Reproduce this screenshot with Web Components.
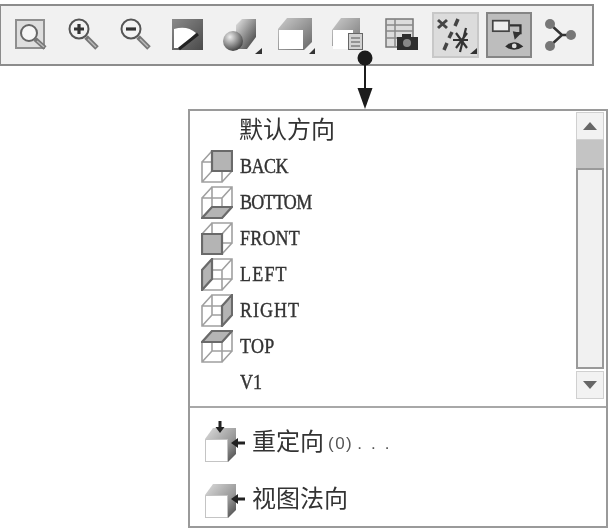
<!DOCTYPE html>
<html lang="zh">
<head>
<meta charset="utf-8">
<title>saved views</title>
<style>
  html, body { margin: 0; background: #fff; overflow: hidden; }
  body { position: relative; width: 609px; height: 528px; font-family: "Noto Sans CJK SC", "Liberation Sans", sans-serif; color: #333; }
  small i { font-style: normal; letter-spacing: 9px; margin-left: 4px; }
</style>
</head>
<body>
<tool-bar>
  <tool-btn w="32" ml="8"><svg viewBox="15 12 32 46"><rect x="16" y="20" width="28" height="28" fill="#dedede" stroke="#8f8f8f" stroke-width="2"/><circle cx="29" cy="33" r="8" fill="#f6f6f6" stroke="#666" stroke-width="2"/><path d="M35 39l10 9" stroke="#777" stroke-width="4.500"/><path d="M37 41l7 6" stroke="#bbb" stroke-width="1.500"/></svg></tool-btn>
  <tool-btn w="34" ml="20"><svg viewBox="67 12 34 46"><circle cx="79" cy="29" r="9.500" fill="#f2f2f2" stroke="#555" stroke-width="2"/><path d="M74 29h10M79 24v10" stroke="#333" stroke-width="3.200"/><path d="M86 37l11 11" stroke="#777" stroke-width="5"/><path d="M88 39l8 8" stroke="#bbb" stroke-width="1.500"/></svg></tool-btn>
  <tool-btn w="34" ml="18"><svg viewBox="119 12 34 46"><circle cx="131" cy="29" r="9.500" fill="#f2f2f2" stroke="#555" stroke-width="2"/><path d="M126 29h10" stroke="#333" stroke-width="3.200"/><path d="M138 37l11 11" stroke="#777" stroke-width="5"/><path d="M140 39l8 8" stroke="#bbb" stroke-width="1.500"/></svg></tool-btn>
  <tool-btn w="33" ml="18"><svg viewBox="171 12 33 46"><defs><linearGradient id="a" x1="0" y1="0" x2="1" y2="1"><stop offset="0" stop-color="#8a8a8a"/><stop offset="1" stop-color="#4a4a4a"/></linearGradient></defs><rect x="172" y="19" width="31" height="31" fill="url(#a)"/><path d="M174 29q13-4 22 4l-15 15h-7z" fill="#fff"/><path d="M179 49l19-15" stroke="#222" stroke-width="3"/></svg></tool-btn>
  <tool-btn w="41" ml="19"><svg viewBox="223 12 41 46"><defs><linearGradient id="b" x1="0" y1="0" x2="1" y2="1"><stop offset="0" stop-color="#e8e8e8"/><stop offset="1" stop-color="#333"/></linearGradient><radialGradient id="c" cx=".35" cy=".3" r=".8"><stop offset="0" stop-color="#eee"/><stop offset="1" stop-color="#333"/></radialGradient></defs><path d="M236 25l6-6h14v18l-9 12h-11z" fill="url(#b)"/><circle cx="233" cy="41" r="10" fill="url(#c)"/><path d="M255 54h7v-6z" fill="#333"/></svg></tool-btn>
  <tool-btn w="38" ml="13"><svg viewBox="277 12 38 46"><defs><linearGradient id="e" x1="0" y1="0" x2="1" y2="1"><stop offset="0" stop-color="#ccc"/><stop offset="1" stop-color="#666"/></linearGradient></defs><path d="M278 29l9-11h25v24l-8 8h-26z" fill="url(#e)"/><path d="M279 30h24v19h-24z" fill="#fff"/><path d="M309 54h6v-6z" fill="#333"/></svg></tool-btn>
  <tool-btn w="33" ml="16"><svg viewBox="331 12 33 46"><defs><linearGradient id="d" x1="0" y1="0" x2="1" y2="1"><stop offset="0" stop-color="#ccc"/><stop offset="1" stop-color="#777"/></linearGradient></defs><path d="M332 30l9-12h19v28h-28z" fill="url(#d)"/><path d="M333 30h20v19h-20z" fill="#fff"/><rect x="348.500" y="33.500" width="14" height="16" fill="#d2d2d2" stroke="#666"/><path d="M351 38h9M351 42h9M351 46h9" stroke="#555"/></svg></tool-btn>
  <tool-btn w="35" ml="20"><svg viewBox="384 12 35 46"><rect x="386" y="19" width="27" height="28" fill="#dcdcdc" stroke="#777" stroke-width="1.500"/><path d="M386 25h27M386 31h27M386 38h14M395 19v28" stroke="#888" stroke-width="1.500"/><rect x="397" y="37" width="21" height="13" fill="#2e2e2e"/><rect x="402" y="34" width="9" height="4" fill="#2e2e2e"/><circle cx="407" cy="43" r="4" fill="#888"/></svg></tool-btn>
  <tool-btn w="47" ml="13" state="soft"><svg viewBox="434 14 43 42"><path d="M438 20l9 8M447 20l-9 8" stroke="#444" stroke-width="3"/><path d="M458 19l-3 7M452 32l-3 6M447 43l-3 7" stroke="#444" stroke-width="3.500"/><path d="M466 28l-6 24M453 40h15M456 33l11 15M467 33l-11 15" stroke="#333" stroke-width="2.200"/><path d="M470 54h7v-6z" fill="#333"/></svg></tool-btn>
  <tool-btn w="46" ml="7" state="on"><svg viewBox="487 14 44 42"><rect x="492" y="20" width="17" height="11" fill="#eee" stroke="#444" stroke-width="1.800"/><path d="M510 25h11v8h-5" fill="none" stroke="#333" stroke-width="2.400"/><path d="M513 31l9 2-7 7z" fill="#333"/><path d="M505 47q9-9 19 0q-10 7-19 0z" fill="#2e2e2e"/><circle cx="514.500" cy="46.500" r="2.500" fill="#ddd"/></svg></tool-btn>
  <tool-btn w="32" ml="13"><svg viewBox="545 12 32 46"><path d="M551 25l11 10-11 10M562 35h8" fill="none" stroke="#333" stroke-width="2.500"/><circle cx="550" cy="24" r="5" fill="#777"/><circle cx="571" cy="35" r="5" fill="#777"/><circle cx="550" cy="46" r="5" fill="#777"/></svg></tool-btn>
</tool-bar>

<call-out></call-out>

<view-panel>
  <view-row>默认方向</view-row>
  <view-row face="back" mono style="letter-spacing:-.5px">BACK</view-row>
  <view-row face="bottom" mono style="letter-spacing:-.7px">BOTTOM</view-row>
  <view-row face="front" mono style="letter-spacing:.2px">FRONT</view-row>
  <view-row face="left" mono style="letter-spacing:1.2px">LEFT</view-row>
  <view-row face="right" mono style="letter-spacing:1px">RIGHT</view-row>
  <view-row face="top" mono style="letter-spacing:.3px">TOP</view-row>
  <view-row mono>V1</view-row>

  <action-row slot="actions" kind="reorient">重定向<small>(0)<i>...</i></small></action-row>
  <action-row slot="actions" kind="normal">视图法向</action-row>
</view-panel>

<script>
class ToolBar extends HTMLElement {
  constructor() {
    super();
    this.attachShadow({ mode: "open" }).innerHTML = `
      <style>
        :host { display: flex; box-sizing: border-box; width: 594px; height: 62px; margin-top: 4px;
                align-items: center; background: #f1f1f1; border: 2px solid #8c8c8c; border-left-width: 1px; padding-left: 6px; }
      </style>
      <slot></slot>`;
  }
}
customElements.define("tool-bar", ToolBar);

class ToolBtn extends HTMLElement {
  constructor() {
    super();
    this.attachShadow({ mode: "open" });
  }
  connectedCallback() {
    this.shadowRoot.innerHTML = `
      <style>
        :host { display: flex; box-sizing: border-box; height: 46px; flex: none;
                width: ${this.getAttribute("w")}px; margin-left: ${this.getAttribute("ml")}px; filter: blur(.5px); }
        :host([state=soft]) { background: #dcdcdc; border: 2px solid #c8c8c8; }
        :host([state=on]) { background: #bdbdbd; border: 2px solid #858585; }
        ::slotted(svg) { width: 100%; height: 100%; display: block; }
      </style>
      <slot></slot>`;
  }
}
customElements.define("tool-btn", ToolBtn);

// marker and arrow from the toolbar button down to the menu
class CallOut extends HTMLElement {
  constructor() {
    super();
    this.attachShadow({ mode: "open" }).innerHTML = `
      <style>
        :host { position: absolute; left: 356px; top: 50px; width: 18px; height: 60px; filter: blur(.3px); }
        svg { display: block; }
      </style>
      <svg width="18" height="60" viewBox="0 0 18 60">
        <circle cx="9" cy="8" r="7.500" fill="#1c1c1c"/>
        <path d="M9 10v30" stroke="#1c1c1c" stroke-width="2"/>
        <path d="M1.500 38h15L9 59z" fill="#1c1c1c"/>
      </svg>`;
  }
}
customElements.define("call-out", CallOut);

class ViewPanel extends HTMLElement {
  constructor() {
    super();
    this.attachShadow({ mode: "open" }).innerHTML = `
      <style>
        :host { display: block; box-sizing: border-box; width: 420px; height: 419px; margin: 43px 0 0 188px;
                background: #fff; border: 2px solid #9a9a9a; }
        .top { display: flex; height: 295px; border-bottom: 2px solid #a8a8a8; box-sizing: content-box; }
        .list { flex: 1; padding-top: 1px; }
        .bottom { display: grid; grid-template-rows: 56px 55px; padding-top: 7px; }
        scroll-bar { margin: 1px 2px 0 0; }
      </style>
      <div class="top">
        <div class="list"><slot></slot></div>
        <scroll-bar></scroll-bar>
      </div>
      <div class="bottom"><slot name="actions"></slot></div>`;
  }
}
customElements.define("view-panel", ViewPanel);

class ScrollBar extends HTMLElement {
  constructor() {
    super();
    this.attachShadow({ mode: "open" }).innerHTML = `
      <style>
        :host { display: flex; flex-direction: column; width: 28px; height: 287px; filter: blur(.4px); }
        .btn { flex: none; height: 28px; box-sizing: border-box; background: #f2f2f2; border: 1px solid #d0d0d0;
               display: flex; align-items: center; justify-content: center; }
        .gap { flex: none; height: 28px; background: #c4c4c4; }
        .thumb { flex: 1; background: #f1f1f1; border: 2px solid #9a9a9a; margin-bottom: 2px; }
        svg { display: block; }
      </style>
      <div class="btn"><svg width="14" height="8"><path d="M0 8h14L7 0z" fill="#666"/></svg></div>
      <div class="gap"></div>
      <div class="thumb"></div>
      <div class="btn"><svg width="14" height="8"><path d="M0 0h14L7 8z" fill="#666"/></svg></div>`;
  }
}
customElements.define("scroll-bar", ScrollBar);

const FACES = {
  back: "M11 1h20v20H11z",
  front: "M1 12h20v20H1z",
  top: "M1 12L11 1h20L21 12z",
  bottom: "M1 32l10-11h20L21 32z",
  left: "M1 12L11 1v20L1 32z",
  right: "M21 12L31 1v20L21 32z"
};

class ViewRow extends HTMLElement {
  constructor() {
    super();
    this.attachShadow({ mode: "open" });
  }
  connectedCallback() {
    const d = FACES[this.getAttribute("face")];
    const icon = d ? `
      <svg width="32" height="33" viewBox="0 0 32 33" fill="none" stroke="#a0a0a0" stroke-width="1.600">
        <path d="M1 12h20v20H1zM11 1h20v20H11zM1 12L11 1M21 12L31 1M1 32l10-11M21 32l10-11"/>
        <path d="${d}" fill="#b4b4b4" stroke="#6a6a6a" stroke-width="2.200"/>
      </svg>` : "";
    this.shadowRoot.innerHTML = `
      <style>
        :host { display: flex; align-items: center; height: 36px; padding-left: 11px; color: #333; }
        .ic { flex: none; width: 39px; height: 33px; filter: blur(.35px); }
        .tx { font: 24px/36px "Noto Sans CJK SC", "Liberation Sans", sans-serif; filter: blur(.3px); margin: -4px 0 0 -1px; }
        :host([mono]) .tx { font: 18px/36px "Liberation Serif", "Noto Sans CJK SC", serif; transform: scaleY(1.2);
                            -webkit-text-stroke: .35px #333; margin: 0; }
      </style>
      <div class="ic">${icon}</div>
      <div class="tx"><slot></slot></div>`;
  }
}
customElements.define("view-row", ViewRow);

class ActionRow extends HTMLElement {
  constructor() {
    super();
    this.attachShadow({ mode: "open" });
  }
  connectedCallback() {
    const down = this.getAttribute("kind") === "reorient";
    this.shadowRoot.innerHTML = `
      <style>
        :host { display: flex; align-items: center; padding-left: 14px; color: #333; }
        svg { flex: none; width: 48px; height: 44px; filter: blur(.4px); }
        .tx { font: 24px/1 "Noto Sans CJK SC", "Liberation Sans", sans-serif; filter: blur(.3px); margin-top: -4px; }
        ::slotted(small) { font: 17px "Liberation Sans", sans-serif; letter-spacing: 1.500px; margin-left: 4px; vertical-align: 1px; color: #555; }
      </style>
      <svg viewBox="0 0 48 44">
        <defs><linearGradient id="g" x1="0" y1="0" x2="1" y2="1"><stop offset="0" stop-color="#ddd"/><stop offset=".6" stop-color="#999"/><stop offset="1" stop-color="#444"/></linearGradient></defs>
        <path d="M1 18l8-11h23v26l-8 8H1z" fill="url(#g)"/>
        <path d="M1.500 18.500h22v22h-22z" fill="#fff" stroke="#c4c4c4"/>
        ${down ? '<path d="M14.500 0h3v6h3l-4.500 6-4.500-6h3z" fill="#222"/>' : ""}
        <path d="M41 20.500v3H34v3.500l-7-5 7-5v3.500z" fill="#222"/>
      </svg>
      <div class="tx"><slot></slot></div>`;
  }
}
customElements.define("action-row", ActionRow);
</script>
</body>
</html>
